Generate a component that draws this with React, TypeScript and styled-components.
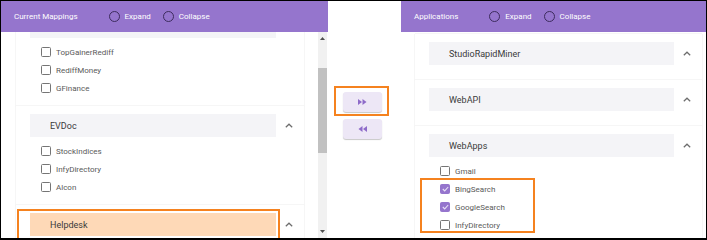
import { useLayoutEffect, useRef } from 'react'
import styled, { createGlobalStyle } from 'styled-components'

const GlobalStyle = createGlobalStyle`
  body {
    margin: 0;
    font-family: Roboto, 'Liberation Sans', sans-serif;
  }
`

const purple = '#9575cd'
const orange = '#f5821f'

type Item = { name: string; checked?: boolean }
type Group = { id: string; name: string; expanded: boolean; items?: Item[]; marked?: boolean; markFrom?: number }

// first group is scrolled mostly out of view, its title is hidden under the header
const mappings: Group[] = [
  {
    id: 'rediff',
    name: '',
    expanded: true,
    items: [{ name: 'TopGainerRediff' }, { name: 'RediffMoney' }, { name: 'GFinance' }]
  },
  {
    id: 'evdoc',
    name: 'EVDoc',
    expanded: true,
    items: [{ name: 'StockIndices' }, { name: 'InfyDirectory' }, { name: 'Alcon' }]
  },
  { id: 'helpdesk', name: 'Helpdesk', expanded: false, marked: true }
]

const applications: Group[] = [
  { id: 'studio', name: 'StudioRapidMiner', expanded: false },
  { id: 'webapi', name: 'WebAPI', expanded: false },
  {
    id: 'webapps',
    name: 'WebApps',
    expanded: true,
    markFrom: 1,
    items: [
      { name: 'Gmail' },
      { name: 'BingSearch', checked: true },
      { name: 'GoogleSearch', checked: true },
      { name: 'InfyDirectory' }
    ]
  }
]

const Chevron = () => (
  <svg width='8' height='5' viewBox='0 0 8 5'>
    <polyline points='0.8,4.3 4,1.2 7.2,4.3' fill='none' stroke='#6d6d6d' strokeWidth='1.2' />
  </svg>
)

const Check = () => (
  <svg width='7' height='6' viewBox='0 0 7 6'>
    <polyline points='0.8,3 2.7,4.9 6.2,1' fill='none' stroke='#e9e1f7' strokeWidth='1.1' />
  </svg>
)

const Arrows = ({ back }: { back?: boolean }) => (
  <svg width='9' height='6' viewBox='0 0 9 6' style={back ? { transform: 'scaleX(-1)' } : undefined}>
    <polygon points='0,0 4,3 0,6' fill='#8e6bc9' />
    <polygon points='4.5,0 8.5,3 4.5,6' fill='#8e6bc9' />
  </svg>
)

const GroupCard = ({ group, right }: { group: Group; right: number }) => {
  const items = group.items || []
  const split = group.markFrom ?? items.length
  return (
    <Card $expanded={group.expanded} $right={right}>
      <BarRow>
        <GroupBar $marked={group.marked}>{group.name}</GroupBar>
        <ChevronBox>
          <Chevron />
        </ChevronBox>
      </BarRow>
      {group.expanded && (
        <ItemList>
          {items.slice(0, split).map(it => (
            <ItemRow key={it.name} item={it} />
          ))}
          {split < items.length && (
            <Marked>
              {items.slice(split).map(it => (
                <ItemRow key={it.name} item={it} />
              ))}
            </Marked>
          )}
        </ItemList>
      )}
    </Card>
  )
}

const ItemRow = ({ item }: { item: Item }) => (
  <Row>
    <Box $checked={item.checked}>{item.checked && <Check />}</Box>
    {item.name}
  </Row>
)

const PanelHeader = ({ title }: { title: string }) => (
  <Header>
    <Title>{title}</Title>
    <RadioOption>
      <Radio />
      Expand
    </RadioOption>
    <RadioOption>
      <Radio />
      Collapse
    </RadioOption>
  </Header>
)

export default function App() {
  const leftRef = useRef<HTMLDivElement>(null)

  useLayoutEffect(() => {
    if (leftRef.current) leftRef.current.scrollTop = 27
  }, [])

  return (
    <Frame>
      <GlobalStyle />
      <Panel $width={327}>
        <PanelHeader title='Current Mappings' />
        <Body>
          <Viewport ref={leftRef}>
            {mappings.map(g => (
              <GroupCard key={g.id} group={g} right={14} />
            ))}
          </Viewport>
          <Scrollbar>
            <ScrollArrow>
              <svg width='5' height='3' viewBox='0 0 5 3'>
                <polygon points='0,3 2.5,0 5,3' fill='#505050' />
              </svg>
            </ScrollArrow>
            <Thumb />
            <ScrollArrow>
              <svg width='5' height='3' viewBox='0 0 5 3'>
                <polygon points='0,0 2.5,3 5,0' fill='#505050' />
              </svg>
            </ScrollArrow>
          </Scrollbar>
        </Body>
      </Panel>

      <Transfer>
        <MoveButton $marked>
          <Arrows />
        </MoveButton>
        <MoveButton>
          <Arrows back />
        </MoveButton>
      </Transfer>

      <Panel>
        <PanelHeader title='Applications' />
        <Body>
          <Viewport>
            {applications.map(g => (
              <GroupCard key={g.id} group={g} right={4} />
            ))}
          </Viewport>
        </Body>
      </Panel>
    </Frame>
  )
}

const Frame = styled.div`
  display: flex;
  width: 707px;
  height: 240px;
  box-sizing: border-box;
  border: 1px solid #000;
  border-bottom-width: 2px;
  background: #fff;
  overflow: hidden;
`

const Panel = styled.div<{ $width?: number }>`
  display: flex;
  flex-direction: column;
  ${p => (p.$width ? `flex: 0 0 ${p.$width}px;` : 'flex: 1;')}
  min-width: 0;
`

const Header = styled.div`
  flex: 0 0 31px;
  display: flex;
  align-items: center;
  padding-left: 13px;
  background: ${purple};
  color: #fff;
  font-size: 8px;
`

const Title = styled.span`
  margin-right: 31px;
`

const RadioOption = styled.span`
  display: flex;
  align-items: center;
  gap: 5px;
  margin-right: 12px;
`

const Radio = styled.span`
  width: 11px;
  height: 11px;
  box-sizing: border-box;
  border: 1.5px solid #3d2c5e;
  border-radius: 50%;
`

const Body = styled.div`
  flex: 1;
  display: flex;
  min-height: 0;
`

const Viewport = styled.div`
  flex: 1;
  overflow: hidden;
  padding-top: 2px;
`

const Scrollbar = styled.div`
  flex: 0 0 9px;
  margin-right: 1px;
  display: flex;
  flex-direction: column;
  background: #f1f1f1;
`

const ScrollArrow = styled.div`
  height: 13px;
  display: flex;
  align-items: center;
  justify-content: center;
`

const Thumb = styled.div`
  height: 85px;
  margin-top: 23px;
  margin-bottom: auto;
  background: #c1c1c1;
`

const Card = styled.div<{ $expanded: boolean; $right: number }>`
  margin: 0 ${p => p.$right}px 0 ${p => (p.$right > 10 ? 15 : 14)}px;
  padding: 8px 0 ${p => (p.$expanded ? 9 : 15)}px;
  background: #fff;
  box-shadow: 0 0 1px rgba(0, 0, 0, 0.22);
`

const BarRow = styled.div`
  display: flex;
  height: 23px;
`

const GroupBar = styled.div<{ $marked?: boolean }>`
  position: relative;
  flex: 1;
  display: flex;
  align-items: center;
  margin-left: 14px;
  padding-left: 20px;
  background: ${p => (p.$marked ? '#fed9b7' : '#f4f4f7')};
  color: #3a3a3a;
  font-size: 9px;
  ${p =>
    p.$marked &&
    `&::after {
      content: '';
      position: absolute;
      left: -13px;
      top: -4px;
      right: -4px;
      bottom: -4px;
      border: 2px solid ${orange};
    }`}
`

const ChevronBox = styled.div`
  flex: 0 0 28px;
  display: flex;
  align-items: center;
  justify-content: center;
  box-sizing: border-box;
  padding-right: 3px;
`

const ItemList = styled.div`
  padding-top: 5px;
`

const Marked = styled.div`
  position: relative;
  &::after {
    content: '';
    position: absolute;
    left: 5px;
    top: -2px;
    width: 115px;
    bottom: 1px;
    box-sizing: border-box;
    border: 2px solid ${orange};
  }
`

const Row = styled.div`
  height: 18px;
  display: flex;
  align-items: center;
  gap: 5px;
  padding-left: 25px;
  color: #5a5a5a;
  font-size: 8px;
`

const Box = styled.span<{ $checked?: boolean }>`
  width: 10px;
  height: 10px;
  box-sizing: border-box;
  display: flex;
  align-items: center;
  justify-content: center;
  border: 1.5px solid ${p => (p.$checked ? purple : '#757575')};
  border-radius: 1.5px;
  background: ${p => (p.$checked ? purple : '#fff')};
`

const Transfer = styled.div`
  flex: 0 0 73px;
  display: flex;
  flex-direction: column;
  gap: 7px;
  padding: 91px 0 0 15px;
  box-sizing: border-box;
`

const MoveButton = styled.button<{ $marked?: boolean }>`
  position: relative;
  width: 39px;
  height: 20px;
  padding: 0;
  display: flex;
  align-items: center;
  justify-content: center;
  border: none;
  border-radius: 3px;
  background: #ede7f6;
  box-shadow: 0 1px 1px rgba(0, 0, 0, 0.22);
  ${p =>
    p.$marked &&
    `&::after {
      content: '';
      position: absolute;
      left: -9px;
      top: -6px;
      right: -7px;
      bottom: -4px;
      border: 2px solid ${orange};
    }`}
`
